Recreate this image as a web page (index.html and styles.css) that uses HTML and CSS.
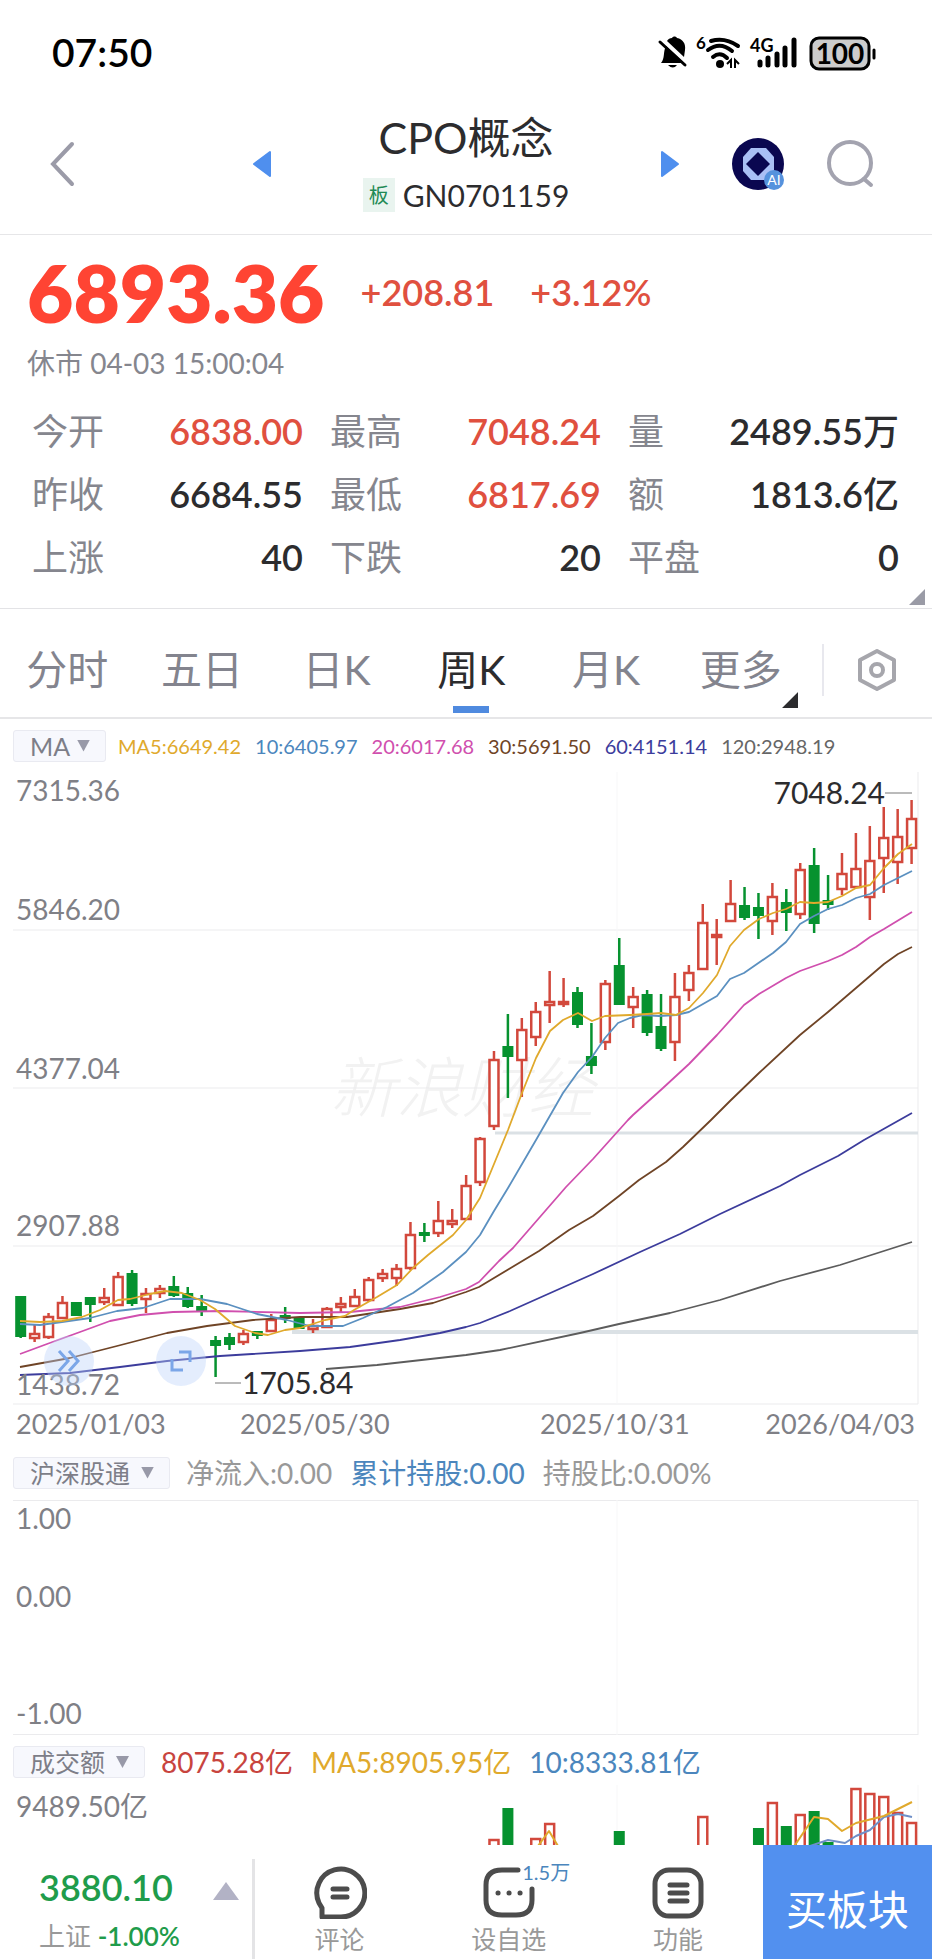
FILE: index.html
```html
<!DOCTYPE html>
<html lang="zh-CN">
<head>
    <meta charset="UTF-8">
    <meta name="viewport" content="width=device-width, initial-scale=1.0">
    <title>CPO概念 GN0701159</title>
    <link rel="stylesheet" href="styles.css">
</head>
<body>

    <div class="status-bar">
        <span class="clock">07:50</span>
        <svg class="status-icons" viewBox="656 30 224 44" role="img" aria-label="静音 WiFi 4G 电量100">
            <!-- bell off -->
            <path d="M661 63c4-4 2-12 5-17l18 17z"/>
            <path d="M667 41c1-2 3-3 5-3 1-2 4-2 5 0 6 1 9 6 8 12l-1 7z"/>
            <path d="M660 42l25 23" fill="none" stroke="#000" stroke-width="3" stroke-linecap="round"/>
            <path d="M668 65h9q-4 5-9 0z"/>
            <!-- wifi -->
            <text x="696" y="49" font-size="17">6</text>
            <g fill="none" stroke="#000" stroke-width="4" stroke-linecap="round">
                <path d="M711 41q14-4 27 5"/>
                <path d="M708 50q12-9 24 1"/>
                <path d="M713 57q7-6 14 1"/>
            </g>
            <circle cx="720" cy="64" r="4"/>
            <path d="M727 64l4-4v8M735 68v-8l4 4" fill="none" stroke="#000" stroke-width="2"/>
            <!-- signal -->
            <text x="750" y="52" font-size="18">4G</text>
            <g stroke="#000" stroke-width="5" stroke-linecap="round">
                <path d="M760 62v3M768 58v7M777 54v11M785 48v17M794 40v25"/>
            </g>
            <!-- battery -->
            <rect x="811" y="38" width="58" height="31" rx="8" fill="#ccc" stroke="#000" stroke-width="3"/>
            <path d="M874 50v8" stroke="#000" stroke-width="3" stroke-linecap="round"/>
            <text x="840" y="64" font-size="28" text-anchor="middle">100</text>
        </svg>
    </div>

    <header class="header">
        <button class="icon-btn back" aria-label="返回">
            <svg width="26" height="46" viewBox="0 0 26 46"><path d="M23 3L4 23l19 20" fill="none" stroke="#9b9ba8" stroke-width="4" stroke-linecap="round"/></svg>
        </button>
        <div class="title-group">
            <button class="icon-btn" aria-label="上一个">
                <svg width="20" height="28" viewBox="0 0 20 28"><path d="M18 2v24L2 14z" fill="#4f8fee" stroke="#4f8fee" stroke-width="2" stroke-linejoin="round"/></svg>
            </button>
            <div class="title">
                <h1>CPO概念</h1>
                <p><span class="board">板</span>GN0701159</p>
            </div>
            <button class="icon-btn" aria-label="下一个">
                <svg width="20" height="28" viewBox="0 0 20 28"><path d="M2 2v24l16-12z" fill="#4f8fee" stroke="#4f8fee" stroke-width="2" stroke-linejoin="round"/></svg>
            </button>
        </div>
        <div class="header-actions">
            <button class="icon-btn" aria-label="AI助手">
                <svg width="52" height="52" viewBox="0 0 52 52">
                    <circle cx="26" cy="26" r="26" fill="#0a0750"/>
                    <path d="M19 10h15l8 9v14l-8 9H19l-8-9V19z" fill="#a9bff5"/>
                    <path d="M26 14l12 12-12 12-12-12z" fill="#0a0750"/>
                    <circle cx="42" cy="42" r="10" fill="#5592dd"/>
                    <text x="42" y="47" font-size="14" text-anchor="middle" fill="#fff">AI</text>
                </svg>
            </button>
            <button class="icon-btn" aria-label="搜索">
                <svg width="48" height="50" viewBox="0 0 48 50"><g fill="none" stroke="#a3a3af" stroke-width="4"><circle cx="24" cy="24" r="21"/><path d="M38 40l7 6" stroke-linecap="round"/></g></svg>
            </button>
        </div>
    </header>

    <section class="quote">
        <div class="price-row">
            <span class="price">6893.36</span>
            <span class="change">+208.81</span>
            <span class="change">+3.12%</span>
        </div>
        <p class="time">休市 04-03 15:00:04</p>
        <dl class="stats">
            <div><dt>今开</dt><dd class="up">6838.00</dd></div>
            <div><dt>最高</dt><dd class="up">7048.24</dd></div>
            <div><dt>量</dt><dd>2489.55<span class="unit">万</span></dd></div>
            <div><dt>昨收</dt><dd>6684.55</dd></div>
            <div><dt>最低</dt><dd class="up">6817.69</dd></div>
            <div><dt>额</dt><dd>1813.6<span class="unit">亿</span></dd></div>
            <div><dt>上涨</dt><dd>40</dd></div>
            <div><dt>下跌</dt><dd>20</dd></div>
            <div><dt>平盘</dt><dd>0</dd></div>
        </dl>
        <span class="corner quote-corner"></span>
    </section>

    <nav class="tabs">
        <button class="tab">分时</button>
        <button class="tab">五日</button>
        <button class="tab">日K</button>
        <button class="tab active">周K</button>
        <button class="tab">月K</button>
        <button class="tab">更多<span class="corner tab-corner"></span></button>
        <button class="settings" aria-label="设置">
            <svg width="42" height="44" viewBox="0 0 42 44"><g fill="none" stroke="#a6a6ac" stroke-width="4" stroke-linejoin="round"><path d="M21 3l17 9v20l-17 9-17-9V12z"/><circle cx="21" cy="22" r="6"/></g></svg>
        </button>
    </nav>

    <div class="indicator averages-row">
        <label class="picker"><select aria-label="主图指标"><option>MA</option></select></label>
        <div class="legend small">
            <span class="ma5">MA5:6649.42</span>
            <span class="ma10">10:6405.97</span>
            <span class="ma20">20:6017.68</span>
            <span class="ma30">30:5691.50</span>
            <span class="ma60">60:4151.14</span>
            <span class="ma120">120:2948.19</span>
        </div>
    </div>

    <svg class="chart" viewBox="0 772 932 673" role="img" aria-label="周K线图">
        <text class="watermark" x="330" y="1112">新浪财经</text>
        <path class="grid" d="M13 930H918M13 1088H918M13 1246H918M13 1404H918M918 772V1404"/>
        <path class="grid faint" d="M617 772V1404"/>
        <path class="gap-line" d="M495 1133H918" stroke-width="3"/>
        <path class="gap-line" d="M292 1332H918" stroke-width="4"/>
        <g id="candles"></g>
        <g id="averages"></g>
        <g class="axis">
            <text x="16" y="801">7315.36</text>
            <text x="16" y="920">5846.20</text>
            <text x="16" y="1079">4377.04</text>
            <text x="16" y="1236">2907.88</text>
            <text x="16" y="1395">1438.72</text>
        </g>
        <g class="axis dates">
            <text x="16" y="1434">2025/01/03</text>
            <text x="240" y="1434">2025/05/30</text>
            <text x="540" y="1434">2025/10/31</text>
            <text x="915" y="1434" text-anchor="end">2026/04/03</text>
        </g>
        <path d="M885 793H912M215 1383H241" stroke="#777" stroke-width="1"/>
        <g class="mark">
            <text x="885" y="804" text-anchor="end">7048.24</text>
            <text x="242" y="1394">1705.84</text>
        </g>
        <g class="round-btn">
            <circle cx="69" cy="1361" r="25"/>
            <circle cx="181" cy="1361" r="25"/>
            <path d="M59 1351l9 10-9 10M69 1351l9 10-9 10M179 1352h11v10M172 1359v11h11"/>
        </g>
    </svg>

    <div class="indicator">
        <label class="picker"><select aria-label="副图指标一"><option>沪深股通</option></select></label>
        <div class="legend">
            <span class="muted">净流入:0.00</span>
            <span class="ma10">累计持股:0.00</span>
            <span class="muted">持股比:0.00%</span>
        </div>
    </div>

    <svg class="chart" viewBox="0 1500 932 235" role="img" aria-label="沪深股通">
        <path class="grid" d="M13 1500.500H918M13 1734.500H918M918 1500V1735"/>
        <path class="grid faint" d="M617 1500V1735"/>
        <g class="axis">
            <text x="16" y="1529">1.00</text>
            <text x="16" y="1607">0.00</text>
            <text x="16" y="1724">-1.00</text>
        </g>
    </svg>

    <div class="indicator turnover">
        <label class="picker"><select aria-label="副图指标二"><option>成交额</option></select></label>
        <div class="legend">
            <span class="amount">8075.28亿</span>
            <span class="ma5">MA5:8905.95亿</span>
            <span class="ma10">10:8333.81亿</span>
        </div>
    </div>

    <svg class="chart" viewBox="0 1785 932 60" role="img" aria-label="成交额">
        <path class="grid faint" d="M617 1785V1845M918 1785V1845"/>
        <g id="volumes"></g>
        <g class="axis"><text x="16" y="1817">9489.50亿</text></g>
    </svg>

    <footer class="bottom-bar">
        <button class="index">
            <span class="index-value">3880.10</span>
            <span class="index-name">上证 <b>-1.00%</b></span>
            <svg width="26" height="18" viewBox="0 0 26 18"><path d="M13 0l13 18H0z" fill="#b2b2c5"/></svg>
        </button>
        <button class="action">
            <svg width="54" height="54" viewBox="0 0 54 54"><g fill="none" stroke="#4c4c4c" stroke-width="5" stroke-linecap="round" stroke-linejoin="round"><path d="M27 52a24 24 0 1 0-21-14l3 5v9z"/><path d="M20 24h14M20 32h14"/></g></svg>
            评论
        </button>
        <button class="action">
            <svg width="54" height="54" viewBox="0 0 54 54"><g fill="none" stroke="#4c4c4c" stroke-width="5" stroke-linecap="round"><path d="M36 5H20Q4 5 4 20v15q0 15 16 15h14q16 0 16-15V24"/><path d="M16 28h.1M27 28h.1M38 28h.1"/></g></svg>
            设自选
            <span class="count">1.5万</span>
        </button>
        <button class="action">
            <svg width="54" height="54" viewBox="0 0 54 54"><g fill="none" stroke="#4c4c4c" stroke-width="5" stroke-linecap="round"><rect x="4" y="5" width="46" height="46" rx="14"/><path d="M19 20h17M19 28h17M19 36h17"/></g></svg>
            功能
        </button>
        <button class="buy">买板块</button>
    </footer>

    <script src="chart.js"></script>
</body>
</html>
```

FILE: styles.css
```css
* {
    box-sizing: border-box;
}

body {
    margin: 0;
    background: #fff;
    color: #2c2c2e;
    font-family: Lato, "Noto Sans CJK SC", sans-serif;
}

h1, p, dl, dd {
    margin: 0;
}

button {
    padding: 0;
    border: none;
    background: none;
    font-family: inherit;
    color: inherit;
    cursor: pointer;
}

svg {
    display: block;
}

/* status bar */
.status-bar {
    display: flex;
    justify-content: space-between;
    align-items: center;
    height: 84px;
    padding: 20px 52px 0 52px;
    color: #000;
}

.clock {
    font-size: 39px;
    line-height: 44px;
    font-weight: 600;
}

.status-icons {
    width: 224px;
    height: 44px;
    font-weight: 700;
}

/* header */
.header {
    display: grid;
    grid-template-columns: 1fr 428px 1fr;
    align-items: center;
    height: 151px;
    padding-top: 10px;
    border-bottom: 1px solid #e6e6e8;
}

.icon-btn {
    display: flex;
}

.back {
    margin-left: 49px;
}

.title-group {
    display: flex;
    justify-content: space-between;
    align-items: center;
}

.title {
    display: flex;
    flex-direction: column;
    align-items: center;
    gap: 12px;
    padding-bottom: 6px;
}

.title h1 {
    font-size: 43px;
    line-height: 56px;
    font-weight: 400;
}

.title p {
    display: flex;
    gap: 8px;
    font-size: 30px;
    line-height: 34px;
}

.board {
    width: 32px;
    background: #e9f4ef;
    color: #1f8a55;
    font-size: 20px;
    text-align: center;
}

.header-actions {
    display: flex;
    align-items: center;
    justify-content: flex-end;
    gap: 42px;
    padding-right: 58px;
}

/* quote */
.quote {
    position: relative;
    padding: 17px 33px 19px 27px;
    border-bottom: 1px solid #e3e3e6;
}

.price-row {
    display: flex;
    align-items: center;
    gap: 36px;
}

.price {
    font-size: 80px;
    line-height: 80px;
    font-weight: 800;
    color: #ff4433;
}

.change {
    font-size: 36px;
    line-height: 40px;
    font-weight: 600;
    color: #e0503f;
}

.time {
    margin-top: 14px;
    font-size: 28px;
    line-height: 34px;
    color: #85868e;
}

.stats {
    display: grid;
    grid-template-columns: repeat(3, 1fr);
    column-gap: 27px;
    margin-top: 20px;
    padding-left: 5px;
    font-size: 36px;
    line-height: 63px;
}

.stats div {
    display: flex;
    justify-content: space-between;
}

.stats dt {
    color: #85868e;
}

.stats dd {
    font-weight: 600;
}

.stats .up {
    color: #e0503f;
}

.unit {
    font-weight: 500;
}

.corner {
    position: absolute;
    width: 16px;
    height: 16px;
    background: #9a9ba6;
    clip-path: polygon(100% 0, 100% 100%, 0 100%);
}

.quote-corner {
    right: 7px;
    bottom: 3px;
}

/* period tabs */
.tabs {
    display: flex;
    height: 110px;
    border-bottom: 2px solid #e6e6e8;
}

.tab {
    position: relative;
    flex: 1;
    padding-top: 8px;
    font-size: 41px;
    color: #83848e;
}

.tab.active {
    color: #2c2c2e;
}

.tab.active::after {
    content: "";
    position: absolute;
    left: 50%;
    bottom: 4px;
    width: 36px;
    height: 7px;
    margin-left: -18px;
    background: #4f8adf;
}

.tab-corner {
    right: 10px;
    bottom: 9px;
    background: #2c2c2e;
}

.settings {
    position: relative;
    display: flex;
    justify-content: center;
    align-items: center;
    width: 110px;
    margin-left: 14px;
    padding-top: 14px;
}

.settings::before {
    content: "";
    position: absolute;
    left: 0;
    top: 35px;
    width: 2px;
    height: 52px;
    background: #e8e8ee;
}

/* indicator rows */
.indicator {
    display: flex;
    align-items: center;
    gap: 16px;
    height: 55px;
    padding-left: 13px;
}

.averages-row {
    gap: 12px;
    height: 53px;
}

.picker {
    position: relative;
}

.picker select {
    appearance: none;
    display: block;
    height: 32px;
    padding: 0 38px 0 16px;
    border: 1px solid #e9eaf1;
    border-radius: 3px;
    background: #f7f8fd;
    color: #7d7e88;
    font-family: inherit;
    font-size: 25px;
    line-height: 30px;
}

.averages-row select {
    padding-right: 34px;
}

.picker::after {
    content: "";
    position: absolute;
    right: 16px;
    top: 10px;
    width: 13px;
    height: 12px;
    background: #9899a8;
    clip-path: polygon(0 0, 100% 0, 50% 100%);
}

.legend {
    display: flex;
    gap: 18px;
    font-size: 28px;
    line-height: 32px;
    white-space: nowrap;
}

.legend.small {
    gap: 14px;
    font-size: 20px;
}

.turnover {
    height: 50px;
    padding-top: 4px;
}

.ma5 { color: #e0a92c; }
.ma10 { color: #4b86bd; }
.ma20 { color: #d04fae; }
.ma30 { color: #6f4426; }
.ma60 { color: #3c3c9c; }
.ma120 { color: #666; }
.muted { color: #999; }
.amount { color: #c8443e; }

/* charts */
.chart {
    width: 100%;
    height: auto;
}

.grid {
    fill: none;
    stroke: #ebebed;
}

.faint {
    stroke: #f7f7f8;
}

.gap-line {
    stroke: #dbe1e5;
}

.axis {
    font-size: 28px;
    fill: #7f8086;
}

.dates {
    font-size: 27px;
}

.mark {
    font-size: 30px;
    fill: #2c2c2e;
}

.watermark {
    font-size: 66px;
    font-style: italic;
    font-weight: 300;
    fill: #f2f2f2;
}

.round-btn circle {
    fill: #bcd3fa;
    opacity: .4;
}

.round-btn path {
    fill: none;
    stroke: #7ba6e8;
    stroke-width: 3;
}

/* bottom bar */
.bottom-bar {
    display: flex;
    height: 114px;
}

.index {
    position: relative;
    display: flex;
    flex-direction: column;
    align-items: flex-start;
    justify-content: center;
    gap: 14px;
    flex: 0 0 255px;
    padding: 14px 0 0 39px;
}

.index::after {
    content: "";
    position: absolute;
    right: 0;
    top: 14px;
    bottom: 0;
    width: 3px;
    background: #e4e4e6;
}

.index-value {
    font-size: 36px;
    line-height: 40px;
    font-weight: 600;
    color: #1f9c4b;
}

.index-name {
    font-size: 26px;
    line-height: 30px;
    color: #999;
}

.index-name b {
    font-weight: 600;
    color: #1f9c4b;
}

.index svg {
    position: absolute;
    right: 16px;
    top: 37px;
}

.action {
    position: relative;
    display: flex;
    flex: 1;
    flex-direction: column;
    align-items: center;
    padding-top: 20px;
    font-size: 25px;
    line-height: 40px;
    color: #999;
}

.count {
    position: absolute;
    left: 98px;
    top: 16px;
    font-size: 20px;
    line-height: 22px;
    color: #4b86bd;
}

.buy {
    flex: 1;
    padding-top: 10px;
    background: #5290ef;
    color: #fff;
    font-size: 41px;
}
```

FILE: chart.js
```js
const UP = "#d2483c";
const DOWN = "#06922f";

// each candle: [up?, high, body top, body bottom, low]
const candles = [
    [0,1296,1296,1337,1338],[1,1325,1333,1339,1342],[1,1313,1316,1338,1339],[1,1296,1302,1319,1319],
    [0,1302,1302,1316,1316],[0,1297,1297,1305,1322],[1,1288,1297,1303,1305],[1,1272,1276,1306,1306],
    [0,1270,1273,1304,1306],[1,1288,1293,1300,1313],[1,1285,1288,1294,1298],[0,1276,1286,1296,1297],
    [0,1287,1293,1307,1308],[0,1295,1306,1311,1316],[0,1336,1340,1346,1377],[0,1333,1337,1345,1350],
    [1,1330,1333,1343,1345],[0,1331,1331,1336,1339],[1,1314,1319,1332,1332],[0,1307,1315,1319,1323],
    [0,1317,1317,1329,1329],[1,1319,1325,1330,1333],[1,1307,1308,1328,1328],[1,1297,1303,1308,1312],
    [1,1289,1296,1307,1307],[1,1277,1279,1301,1302],[1,1269,1273,1279,1282],[1,1264,1268,1279,1286],
    [1,1222,1234,1269,1270],[0,1223,1232,1236,1242],[1,1201,1220,1234,1237],[1,1209,1220,1225,1228],
    [1,1175,1185,1220,1220],[1,1137,1138,1183,1186],[1,1051,1059,1127,1130],[0,1014,1046,1057,1098],
    [1,1018,1029,1061,1097],[1,1002,1011,1038,1046],[1,971,1001,1006,1023],[1,978,1001,1005,1007],
    [0,987,992,1025,1028],[0,1023,1056,1066,1074],[1,980,983,1043,1050],[0,938,965,1005,1005],
    [1,987,996,1008,1028],[0,990,994,1033,1036],[0,994,1026,1049,1051],[1,973,996,1043,1061],
    [1,965,972,991,1001],[1,904,922,970,970],[1,919,934,938,965],[1,880,903,922,922],
    [0,887,905,918,920],[0,893,907,916,939],[1,883,896,922,935],[0,889,902,913,931],
    [1,863,869,915,919],[0,848,865,924,933],[0,875,900,905,910],[1,853,873,890,895],
    [1,833,868,888,888],[1,826,860,898,920],[1,807,837,859,893],[1,809,836,863,884],
    [1,800,818,849,864]
];

const averages = {
    "#5c5c5c": "326,1369 377,1365 466,1355 500,1350 580,1333 619,1324 670,1313 720,1300 780,1281 840,1265 912,1242",
    "#3c3c9c": "20,1375 70,1373 120,1367 167,1361 220,1356 300,1351 350,1347 400,1340 440,1333 466,1327 480,1323 510,1311 566,1286 593,1274 640,1252 680,1234 720,1214 780,1186 800,1175 838,1156 864,1140 912,1113",
    "#6f4426": "20,1367 70,1358 117,1346 167,1333 207,1326 253,1320 300,1317 347,1317 400,1309 433,1303 466,1292 479,1287 509,1269 539,1251 569,1230 593,1216 619,1196 639,1180 666,1162 683,1147 711,1120 730,1101 759,1073 800,1035 828,1012 856,988 884,964 898,954 912,947",
    "#d04fae": "20,1354 47,1344 80,1332 110,1321 140,1315 173,1312 220,1311 300,1313 350,1312 400,1307 440,1297 466,1289 479,1282 499,1261 513,1248 566,1187 593,1159 628,1120 633,1115 663,1088 689,1064 717,1035 744,1005 759,994 786,978 800,971 828,961 842,955 856,947 870,937 884,929 912,912",
    "#5b90c0": "20,1324 40,1325 62,1322 90,1318 117,1311 143,1308 170,1299 200,1299 227,1304 257,1314 287,1320 310,1326 343,1326 363,1318 387,1307 413,1293 443,1272 466,1252 480,1235 494,1211 508,1188 536,1140 563,1093 578,1072 592,1057 605,1038 618,1023 630,1018 643,1015 659,1016 676,1015 689,1012 717,996 730,979 744,973 773,953 786,942 800,924 814,916 828,909 842,905 856,898 870,894 884,885 912,871",
    "#e0a92c": "20,1321 40,1322 62,1321 82,1317 100,1310 118,1300 130,1299 150,1294 165,1291 182,1293 200,1300 215,1309 235,1326 255,1333 268,1335 285,1330 300,1328 325,1320 345,1316 354,1310 377,1297 397,1285 413,1268 428,1255 453,1235 466,1220 480,1198 494,1164 508,1130 522,1093 536,1058 550,1031 563,1020 578,1013 592,1021 605,1016 630,1015 647,1014 661,1013 676,1015 689,1008 703,993 717,975 730,946 744,930 759,919 773,913 786,909 800,902 814,903 828,902 842,896 856,888 870,885 884,868 898,854 912,844"
};

// [candle index, up?, top]
const volumes = [
    [34,1,1839],[35,0,1808],[37,1,1838],[38,1,1823],[43,0,1831],[49,1,1816],[53,0,1828],
    [54,1,1802],[55,0,1826],[56,1,1814],[57,0,1811],[58,0,1842],[60,1,1788],[61,1,1793],
    [62,1,1796],[63,1,1812],[64,1,1822]
];

const volumeAverages = {
    "#6f8fc8": "810,1846 828,1840 845,1843 856,1836 870,1830 884,1817 898,1814 912,1817",
    "#e0a92c": "538,1846 549,1831 558,1846 558,1860 780,1860 795,1845 814,1817 828,1819 842,1831 856,1823 884,1816 912,1802"
};

function centerX(i) {
    return 20.7 + i * 13.92;
}

function bar(x, up, top, bottom) {
    if (up) {
        return `<rect x="${x - 4.5}" y="${top + 1}" width="9" height="${Math.max(bottom - top - 2, 1)}" fill="#fff" stroke="${UP}" stroke-width="2.5"/>`;
    }
    return `<rect x="${x - 5.5}" y="${top}" width="11" height="${bottom - top}" fill="${DOWN}"/>`;
}

function lines(set, width) {
    return Object.entries(set).map(([color, points]) =>
        `<polyline points="${points}" fill="none" stroke="${color}" stroke-width="${width}" stroke-linejoin="round"/>`
    ).join("");
}

document.getElementById("candles").innerHTML = candles.map(([up, high, top, bottom, low], i) => {
    const x = centerX(i);
    return `<path d="M${x} ${high}V${low}" stroke="${up ? UP : DOWN}" stroke-width="2.5"/>` + bar(x, up, top, bottom);
}).join("");

document.getElementById("averages").innerHTML = lines(averages, 1.8);

document.getElementById("volumes").innerHTML =
    volumes.map(([i, up, top]) => bar(centerX(i), up, top, 1850)).join("") + lines(volumeAverages, 2);
```
